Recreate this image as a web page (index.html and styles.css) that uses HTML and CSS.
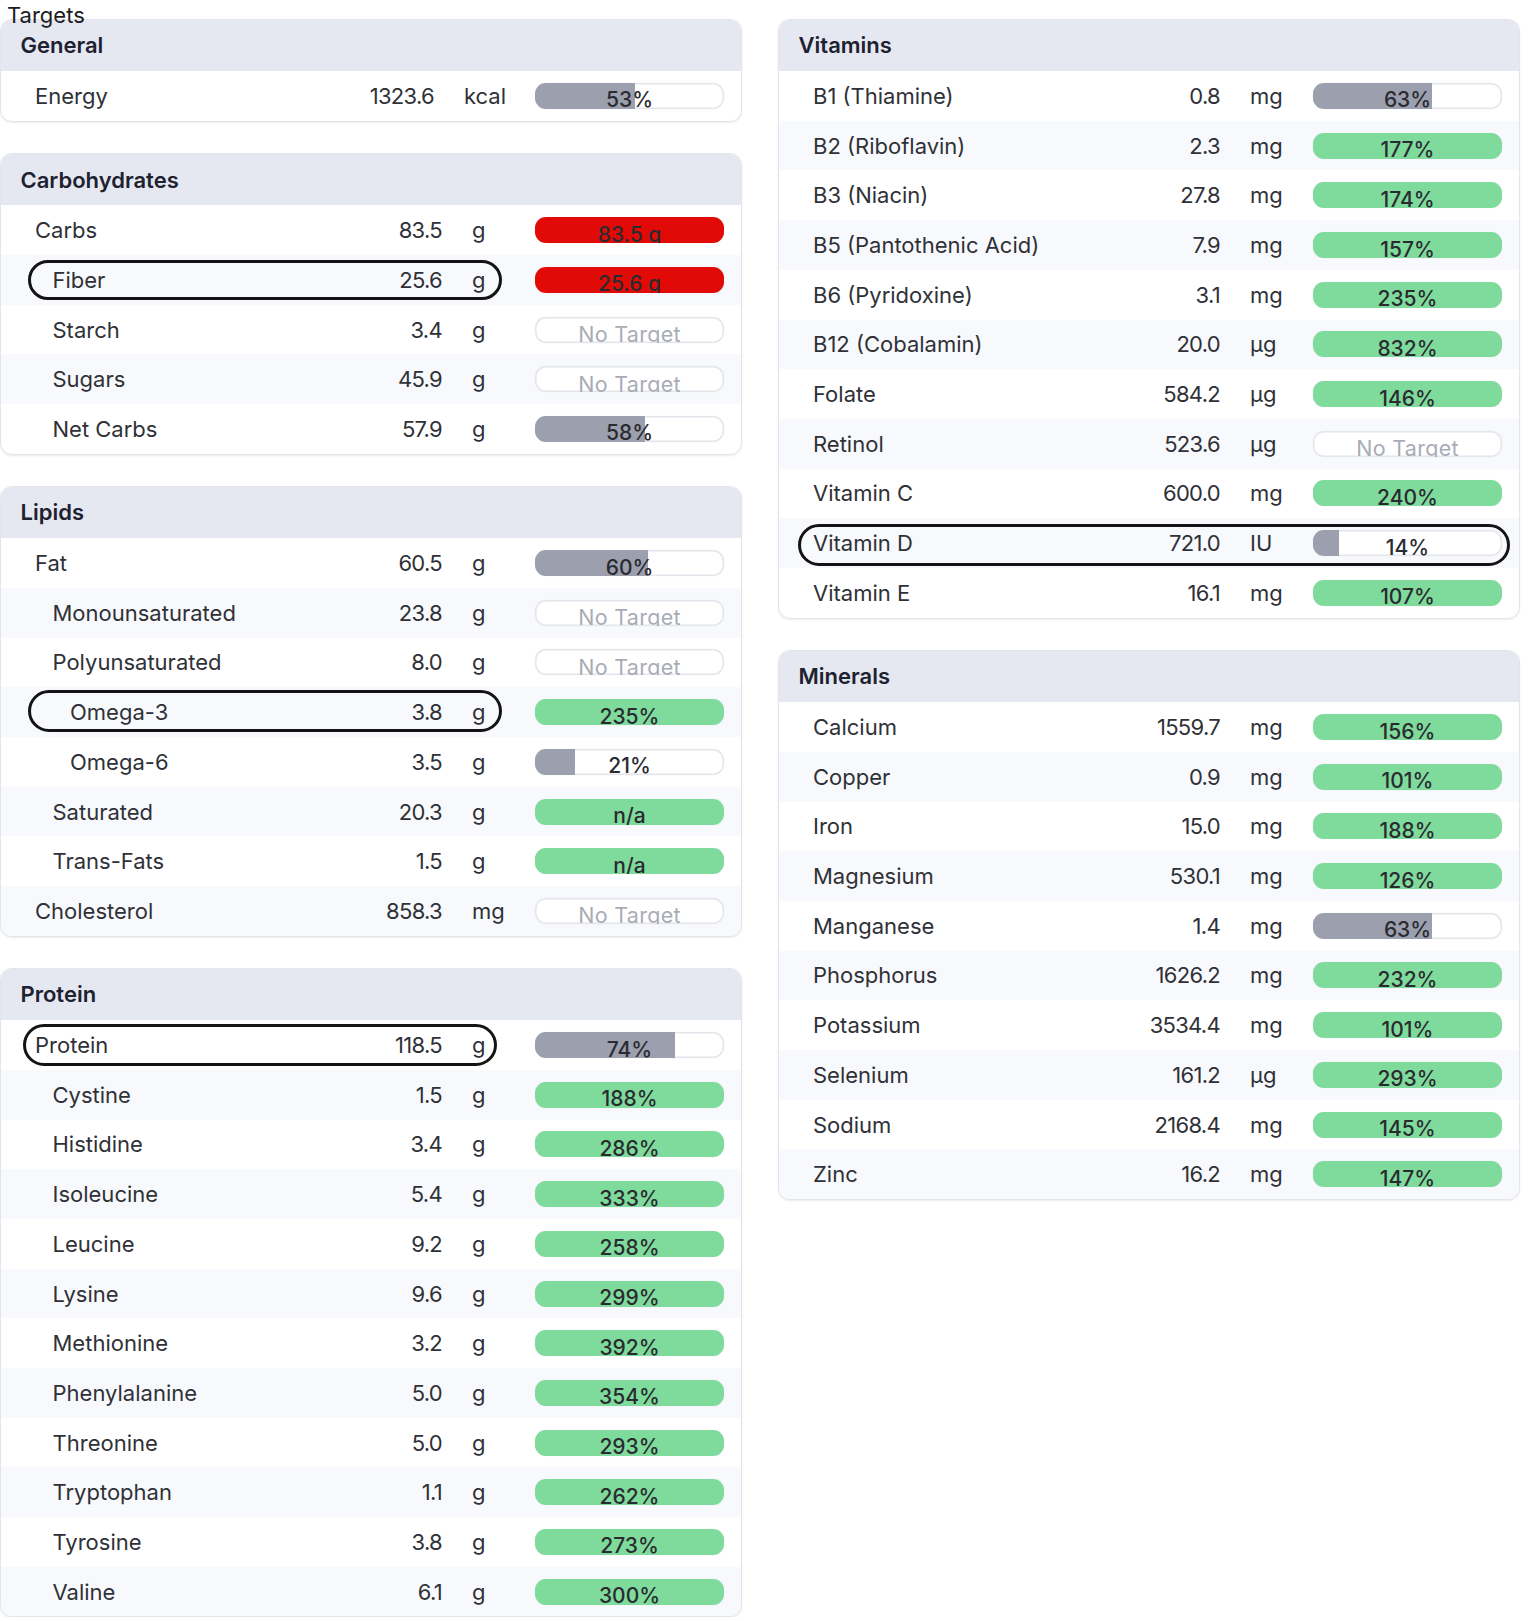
FILE: index.html
```html
<!DOCTYPE html>
<html>
<head>
<meta charset="utf-8">
<title>Targets</title>
<link rel="stylesheet" href="styles.css">
</head>
<body>
<div class="title">Targets</div>
<div class="page">
  <div class="col">
    <section class="card general">
      <div class="card-head">General</div>
      <div class="rows">
        <div class="row"><span class="name">Energy</span><span class="val">1323.6</span><span class="unit">kcal</span><div class="bar"><div class="fill gray" style="width:53%"></div><span class="lbl">53%</span></div></div>
      </div>
    </section>
    <section class="card">
      <div class="card-head">Carbohydrates</div>
      <div class="rows">
        <div class="row"><span class="name">Carbs</span><span class="val">83.5</span><span class="unit">g</span><div class="bar"><div class="fill red" style="width:100%"></div><span class="lbl">83.5 g</span></div></div>
        <div class="row lv1"><span class="name">Fiber</span><span class="val">25.6</span><span class="unit">g</span><div class="bar"><div class="fill red" style="width:100%"></div><span class="lbl">25.6 g</span></div><span class="ring ring-fiber"></span></div>
        <div class="row lv1"><span class="name">Starch</span><span class="val">3.4</span><span class="unit">g</span><div class="bar"><span class="lbl none">No Target</span></div></div>
        <div class="row lv1"><span class="name">Sugars</span><span class="val">45.9</span><span class="unit">g</span><div class="bar"><span class="lbl none">No Target</span></div></div>
        <div class="row lv1"><span class="name">Net Carbs</span><span class="val">57.9</span><span class="unit">g</span><div class="bar"><div class="fill gray" style="width:58%"></div><span class="lbl">58%</span></div></div>
      </div>
    </section>
    <section class="card">
      <div class="card-head">Lipids</div>
      <div class="rows">
        <div class="row"><span class="name">Fat</span><span class="val">60.5</span><span class="unit">g</span><div class="bar"><div class="fill gray" style="width:60%"></div><span class="lbl">60%</span></div></div>
        <div class="row lv1"><span class="name">Monounsaturated</span><span class="val">23.8</span><span class="unit">g</span><div class="bar"><span class="lbl none">No Target</span></div></div>
        <div class="row lv1"><span class="name">Polyunsaturated</span><span class="val">8.0</span><span class="unit">g</span><div class="bar"><span class="lbl none">No Target</span></div></div>
        <div class="row lv2"><span class="name">Omega-3</span><span class="val">3.8</span><span class="unit">g</span><div class="bar"><div class="fill green" style="width:100%"></div><span class="lbl">235%</span></div><span class="ring ring-omega"></span></div>
        <div class="row lv2"><span class="name">Omega-6</span><span class="val">3.5</span><span class="unit">g</span><div class="bar"><div class="fill gray" style="width:21%"></div><span class="lbl">21%</span></div></div>
        <div class="row lv1"><span class="name">Saturated</span><span class="val">20.3</span><span class="unit">g</span><div class="bar"><div class="fill green" style="width:100%"></div><span class="lbl">n/a</span></div></div>
        <div class="row lv1"><span class="name">Trans-Fats</span><span class="val">1.5</span><span class="unit">g</span><div class="bar"><div class="fill green" style="width:100%"></div><span class="lbl">n/a</span></div></div>
        <div class="row"><span class="name">Cholesterol</span><span class="val">858.3</span><span class="unit">mg</span><div class="bar"><span class="lbl none">No Target</span></div></div>
      </div>
    </section>
    <section class="card">
      <div class="card-head">Protein</div>
      <div class="rows">
        <div class="row"><span class="name">Protein</span><span class="val">118.5</span><span class="unit">g</span><div class="bar"><div class="fill gray" style="width:74%"></div><span class="lbl">74%</span></div><span class="ring ring-protein"></span></div>
        <div class="row lv1"><span class="name">Cystine</span><span class="val">1.5</span><span class="unit">g</span><div class="bar"><div class="fill green" style="width:100%"></div><span class="lbl">188%</span></div></div>
        <div class="row lv1"><span class="name">Histidine</span><span class="val">3.4</span><span class="unit">g</span><div class="bar"><div class="fill green" style="width:100%"></div><span class="lbl">286%</span></div></div>
        <div class="row lv1"><span class="name">Isoleucine</span><span class="val">5.4</span><span class="unit">g</span><div class="bar"><div class="fill green" style="width:100%"></div><span class="lbl">333%</span></div></div>
        <div class="row lv1"><span class="name">Leucine</span><span class="val">9.2</span><span class="unit">g</span><div class="bar"><div class="fill green" style="width:100%"></div><span class="lbl">258%</span></div></div>
        <div class="row lv1"><span class="name">Lysine</span><span class="val">9.6</span><span class="unit">g</span><div class="bar"><div class="fill green" style="width:100%"></div><span class="lbl">299%</span></div></div>
        <div class="row lv1"><span class="name">Methionine</span><span class="val">3.2</span><span class="unit">g</span><div class="bar"><div class="fill green" style="width:100%"></div><span class="lbl">392%</span></div></div>
        <div class="row lv1"><span class="name">Phenylalanine</span><span class="val">5.0</span><span class="unit">g</span><div class="bar"><div class="fill green" style="width:100%"></div><span class="lbl">354%</span></div></div>
        <div class="row lv1"><span class="name">Threonine</span><span class="val">5.0</span><span class="unit">g</span><div class="bar"><div class="fill green" style="width:100%"></div><span class="lbl">293%</span></div></div>
        <div class="row lv1"><span class="name">Tryptophan</span><span class="val">1.1</span><span class="unit">g</span><div class="bar"><div class="fill green" style="width:100%"></div><span class="lbl">262%</span></div></div>
        <div class="row lv1"><span class="name">Tyrosine</span><span class="val">3.8</span><span class="unit">g</span><div class="bar"><div class="fill green" style="width:100%"></div><span class="lbl">273%</span></div></div>
        <div class="row lv1"><span class="name">Valine</span><span class="val">6.1</span><span class="unit">g</span><div class="bar"><div class="fill green" style="width:100%"></div><span class="lbl">300%</span></div></div>
      </div>
    </section>
  </div>
  <div class="col">
    <section class="card">
      <div class="card-head">Vitamins</div>
      <div class="rows">
        <div class="row"><span class="name">B1 (Thiamine)</span><span class="val">0.8</span><span class="unit">mg</span><div class="bar"><div class="fill gray" style="width:63%"></div><span class="lbl">63%</span></div></div>
        <div class="row"><span class="name">B2 (Riboflavin)</span><span class="val">2.3</span><span class="unit">mg</span><div class="bar"><div class="fill green" style="width:100%"></div><span class="lbl">177%</span></div></div>
        <div class="row"><span class="name">B3 (Niacin)</span><span class="val">27.8</span><span class="unit">mg</span><div class="bar"><div class="fill green" style="width:100%"></div><span class="lbl">174%</span></div></div>
        <div class="row"><span class="name">B5 (Pantothenic Acid)</span><span class="val">7.9</span><span class="unit">mg</span><div class="bar"><div class="fill green" style="width:100%"></div><span class="lbl">157%</span></div></div>
        <div class="row"><span class="name">B6 (Pyridoxine)</span><span class="val">3.1</span><span class="unit">mg</span><div class="bar"><div class="fill green" style="width:100%"></div><span class="lbl">235%</span></div></div>
        <div class="row"><span class="name">B12 (Cobalamin)</span><span class="val">20.0</span><span class="unit">µg</span><div class="bar"><div class="fill green" style="width:100%"></div><span class="lbl">832%</span></div></div>
        <div class="row"><span class="name">Folate</span><span class="val">584.2</span><span class="unit">µg</span><div class="bar"><div class="fill green" style="width:100%"></div><span class="lbl">146%</span></div></div>
        <div class="row"><span class="name">Retinol</span><span class="val">523.6</span><span class="unit">µg</span><div class="bar"><span class="lbl none">No Target</span></div></div>
        <div class="row"><span class="name">Vitamin C</span><span class="val">600.0</span><span class="unit">mg</span><div class="bar"><div class="fill green" style="width:100%"></div><span class="lbl">240%</span></div></div>
        <div class="row"><span class="name">Vitamin D</span><span class="val">721.0</span><span class="unit">IU</span><div class="bar"><div class="fill gray" style="width:14%"></div><span class="lbl">14%</span></div><span class="ring ring-vitd"></span></div>
        <div class="row"><span class="name">Vitamin E</span><span class="val">16.1</span><span class="unit">mg</span><div class="bar"><div class="fill green" style="width:100%"></div><span class="lbl">107%</span></div></div>
      </div>
    </section>
    <section class="card">
      <div class="card-head">Minerals</div>
      <div class="rows">
        <div class="row"><span class="name">Calcium</span><span class="val">1559.7</span><span class="unit">mg</span><div class="bar"><div class="fill green" style="width:100%"></div><span class="lbl">156%</span></div></div>
        <div class="row"><span class="name">Copper</span><span class="val">0.9</span><span class="unit">mg</span><div class="bar"><div class="fill green" style="width:100%"></div><span class="lbl">101%</span></div></div>
        <div class="row"><span class="name">Iron</span><span class="val">15.0</span><span class="unit">mg</span><div class="bar"><div class="fill green" style="width:100%"></div><span class="lbl">188%</span></div></div>
        <div class="row"><span class="name">Magnesium</span><span class="val">530.1</span><span class="unit">mg</span><div class="bar"><div class="fill green" style="width:100%"></div><span class="lbl">126%</span></div></div>
        <div class="row"><span class="name">Manganese</span><span class="val">1.4</span><span class="unit">mg</span><div class="bar"><div class="fill gray" style="width:63%"></div><span class="lbl">63%</span></div></div>
        <div class="row"><span class="name">Phosphorus</span><span class="val">1626.2</span><span class="unit">mg</span><div class="bar"><div class="fill green" style="width:100%"></div><span class="lbl">232%</span></div></div>
        <div class="row"><span class="name">Potassium</span><span class="val">3534.4</span><span class="unit">mg</span><div class="bar"><div class="fill green" style="width:100%"></div><span class="lbl">101%</span></div></div>
        <div class="row"><span class="name">Selenium</span><span class="val">161.2</span><span class="unit">µg</span><div class="bar"><div class="fill green" style="width:100%"></div><span class="lbl">293%</span></div></div>
        <div class="row"><span class="name">Sodium</span><span class="val">2168.4</span><span class="unit">mg</span><div class="bar"><div class="fill green" style="width:100%"></div><span class="lbl">145%</span></div></div>
        <div class="row"><span class="name">Zinc</span><span class="val">16.2</span><span class="unit">mg</span><div class="bar"><div class="fill green" style="width:100%"></div><span class="lbl">147%</span></div></div>
      </div>
    </section>
  </div>
</div>
</body>
</html>
```

FILE: styles.css
```css
* { box-sizing: border-box; }
html, body { margin: 0; padding: 0; background: #ffffff; }
body {
  font-family: Inter, "Noto Sans", sans-serif;
  color: #2b2d33;
  width: 1534px;
}
.title {
  position: relative;
  z-index: 2;
  height: 18.6px;
  line-height: 30px;
  font-size: 22px;
  padding-left: 7px;
  color: #1c1c1e;
  white-space: nowrap;
}
.page {
  display: grid;
  grid-template-columns: 742px 742px;
  column-gap: 36px;
  align-items: start;
}
.col {
  display: flex;
  flex-direction: column;
  gap: 31px;
}
.card {
  border: 1px solid #e3e5ea;
  border-radius: 12px;
  overflow: hidden;
  background: #ffffff;
  box-shadow: 0 1px 2px rgba(0, 0, 0, 0.08);
}
.card-head {
  height: 51.5px;
  display: flex;
  align-items: center;
  padding-left: 19.5px;
  background: #e5e8f0;
  font-size: 22px;
  font-weight: 600;
  color: #1e2230;
}
.row {
  position: relative;
  height: 49.7px;
  display: grid;
  grid-template-columns: 1fr 110px 93px 189px;
  align-items: center;
  padding: 0 17px 0 34px;
  font-size: 22px;
  color: #2f3137;
}
.rows .row:nth-child(even) { background: #f8f9fc; }
.general .row { grid-template-columns: 1fr 102px 101px 189px; }
.lv1 .name { padding-left: 17.5px; }
.lv2 .name { padding-left: 35px; }
.name { white-space: nowrap; }
.val { text-align: right; letter-spacing: -0.7px; }
.unit { padding-left: 30px; }
.bar {
  height: 26px;
  border-radius: 11px;
  overflow: hidden;
  display: grid;
  background: #ffffff;
  box-shadow: inset 0 0 0 1.5px #e4e6eb, 0 0 2px rgba(0, 0, 0, 0.06);
}
.fill, .lbl { grid-area: 1 / 1; }
.fill { height: 100%; }
.fill.gray { background: #9c9fad; }
.fill.green { background: #7fdb9c; }
.fill.red { background: #e20a06; }
.lbl {
  text-align: center;
  font-size: 21px;
  font-weight: 500;
  line-height: 26px;
  padding-top: 4.5px;
  color: #2a2b30;
  white-space: nowrap;
}
.lbl.none { color: #a9acb5; font-weight: 400; font-size: 21.5px; letter-spacing: 0.3px; }
.ring {
  position: absolute;
  border: 3px solid #141414;
  border-radius: 22px;
  pointer-events: none;
}
.ring-fiber { left: 27px; width: 474px; top: 5px; height: 40.5px; }
.ring-omega { left: 27px; width: 474px; top: 3px; height: 41.5px; }
.ring-protein { left: 21.5px; width: 474px; top: 4px; height: 41.5px; }
.ring-vitd { left: 19px; width: 712px; top: 5.5px; height: 42px; }
```
